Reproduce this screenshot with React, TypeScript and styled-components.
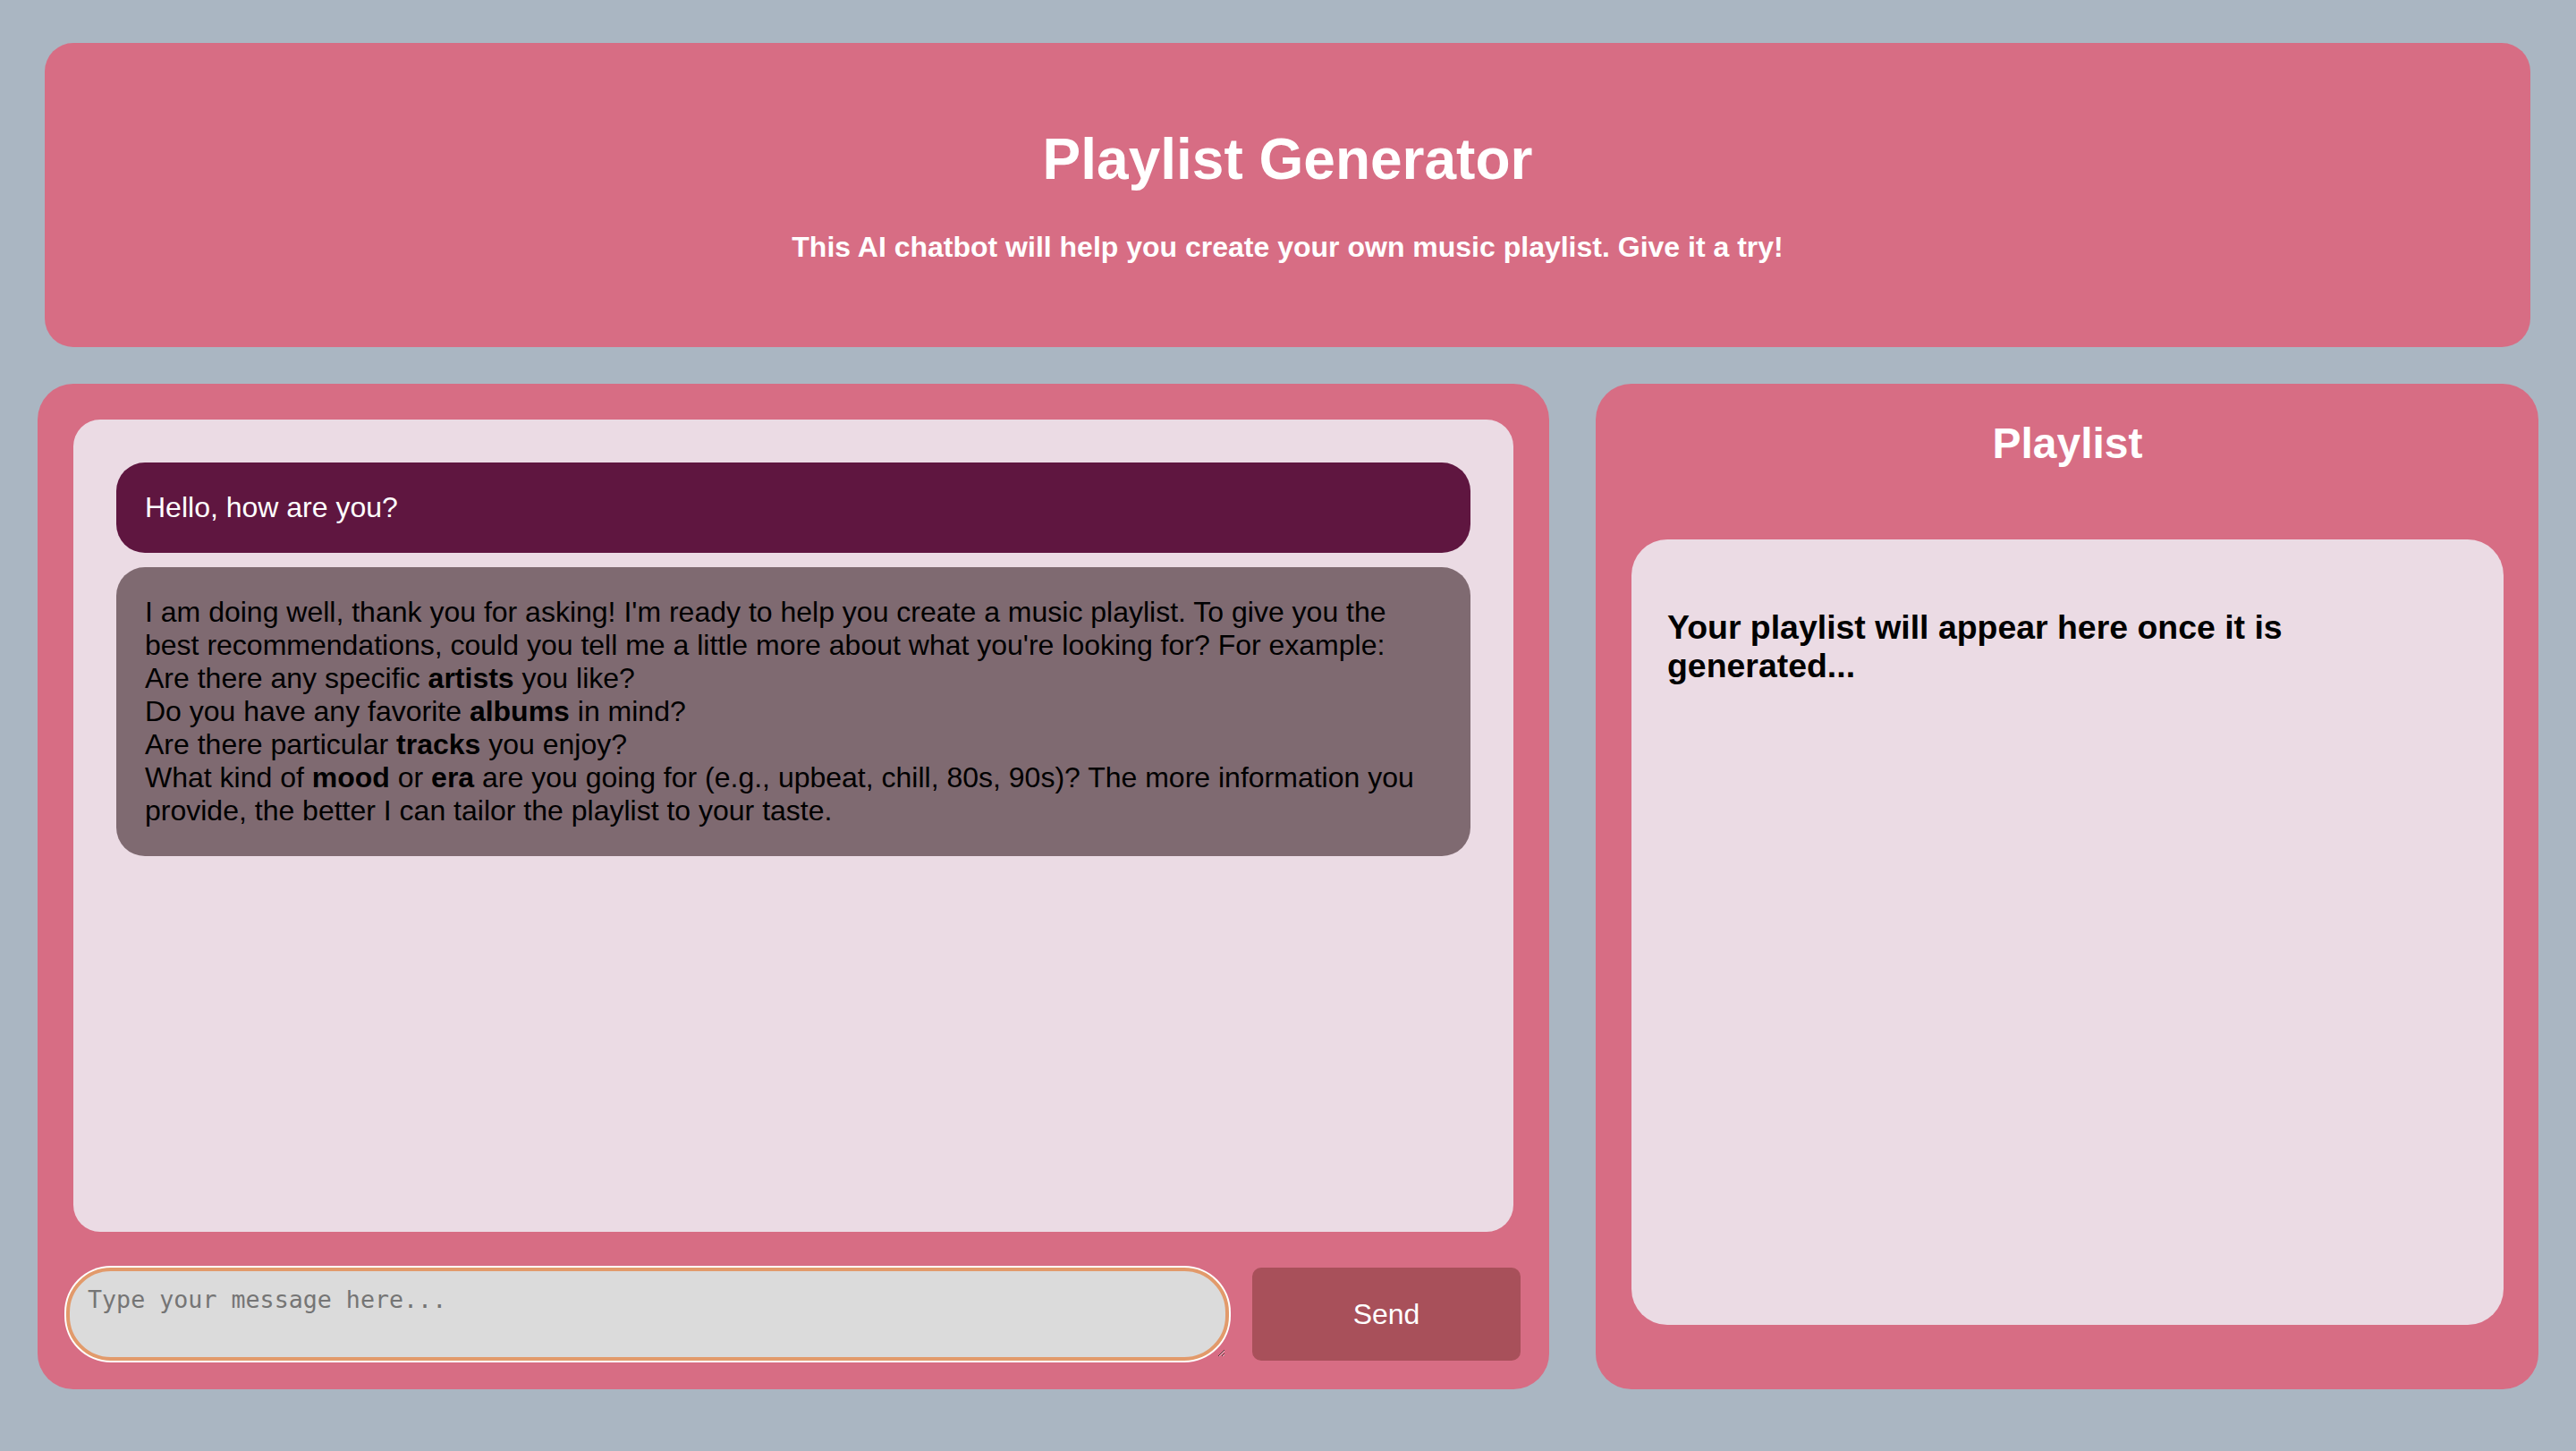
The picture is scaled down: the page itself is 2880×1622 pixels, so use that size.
import React from "react";
import styled, { createGlobalStyle } from "styled-components";

const GlobalStyle = createGlobalStyle`
  html, body {
    margin: 0;
    padding: 0;
    background: #aab6c2;
  }
  body {
    font-family: "Liberation Sans", Arial, Helvetica, sans-serif;
  }
  * { box-sizing: border-box; }
`;

const Page = styled.div`
  min-height: 100vh;
  display: flex;
  flex-direction: column;
`;

const Header = styled.header`
  margin: 48px 51px 0 50px;
  padding: 50px 0;
  background: #d76d84;
  border-radius: 32px;
  text-align: center;
  color: #ffffff;
`;

const Title = styled.h1`
  margin: 43px 0;
  font-size: 64px;
  font-weight: 700;
  line-height: normal;
`;

const Subtitle = styled.h4`
  margin: 43px 0;
  font-size: 32px;
  font-weight: 700;
  line-height: normal;
`;

const Main = styled.main`
  flex: 1;
  display: grid;
  grid-template-columns: 1690fr 1054fr;
  gap: 52px;
  margin: 41px 42px 69px;
`;

const ChatPanel = styled.section`
  display: flex;
  flex-direction: column;
  padding: 40px 40px 32px;
  background: #d76d84;
  border-radius: 40px;
  min-height: 0;
`;

const Messages = styled.div`
  flex: 1;
  display: flex;
  flex-direction: column;
  gap: 16px;
  padding: 48px;
  background: #ebdbe4;
  border-radius: 30px;
  overflow: hidden;
`;

const Bubble = styled.div<{ $from: "user" | "bot" }>`
  padding: 32px;
  border-radius: 32px;
  font-size: 32px;
  line-height: normal;
  background: ${(p) => (p.$from === "user" ? "#5f1640" : "#7f6a71")};
  color: ${(p) => (p.$from === "user" ? "#ffffff" : "#000000")};
`;

const InputRow = styled.div`
  display: flex;
  align-items: center;
  gap: 26px;
  height: 104px;
  margin: 40px -8px 0;
`;

const MessageInput = styled.textarea`
  flex: 1;
  height: 104px;
  padding: 16px 20px;
  background: #dbdbdb;
  border: 4px solid #e29a6b;
  border-radius: 50px;
  box-shadow: 0 0 0 2px #ffffff;
  outline: none;
  font-family: "DejaVu Sans Mono", "Liberation Mono", monospace;
  font-size: 26.67px;
  color: #222;

  &::placeholder {
    color: #757575;
  }
`;

const SendButton = styled.button`
  width: 300px;
  height: 104px;
  border: none;
  border-radius: 10px;
  background: #a8505a;
  color: #ffffff;
  font-family: "Liberation Sans", Arial, sans-serif;
  font-size: 32px;
  cursor: pointer;
`;

const PlaylistPanel = styled.section`
  display: flex;
  flex-direction: column;
  padding: 0 39px 72px 40px;
  background: #d76d84;
  border-radius: 40px;
`;

const PanelTitle = styled.h2`
  margin: 39px 0 80px;
  font-size: 48px;
  font-weight: 700;
  line-height: normal;
  text-align: center;
  color: #ffffff;
`;

const PlaylistBox = styled.div`
  flex: 1;
  padding: 40px;
  background: #ebdbe4;
  border-radius: 40px;
`;

const PlaylistHint = styled.h3`
  margin: 37.44px 0;
  font-size: 37.44px;
  font-weight: 700;
  line-height: normal;
  color: #000000;
`;

export default function App() {
  return (
    <Page>
      <GlobalStyle />
      <Header>
        <Title>Playlist Generator</Title>
        <Subtitle>
          This AI chatbot will help you create your own music playlist. Give it a try!
        </Subtitle>
      </Header>
      <Main>
        <ChatPanel>
          <Messages>
            <Bubble $from="user">Hello, how are you?</Bubble>
            <Bubble $from="bot">
              I am doing well, thank you for asking! I'm ready to help you create a music
              playlist. To give you the best recommendations, could you tell me a little more
              about what you're looking for? For example:
              <br />
              Are there any specific <b>artists</b> you like?
              <br />
              Do you have any favorite <b>albums</b> in mind?
              <br />
              Are there particular <b>tracks</b> you enjoy?
              <br />
              What kind of <b>mood</b> or <b>era</b> are you going for (e.g., upbeat, chill,
              80s, 90s)? The more information you provide, the better I can tailor the playlist
              to your taste.
            </Bubble>
          </Messages>
          <InputRow>
            <MessageInput placeholder="Type your message here..." />
            <SendButton>Send</SendButton>
          </InputRow>
        </ChatPanel>
        <PlaylistPanel>
          <PanelTitle>Playlist</PanelTitle>
          <PlaylistBox>
            <PlaylistHint>Your playlist will appear here once it is generated...</PlaylistHint>
          </PlaylistBox>
        </PlaylistPanel>
      </Main>
    </Page>
  );
}
